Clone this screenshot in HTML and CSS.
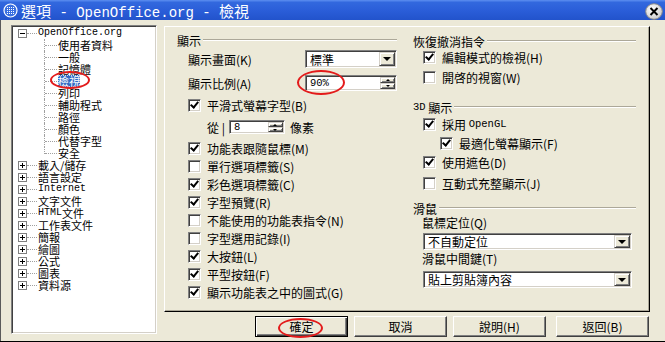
FILE: index.html
```html
<!DOCTYPE html>
<html lang="zh-Hant">
<head>
    <meta charset="UTF-8">
    <meta name="viewport" content="width=device-width, initial-scale=1.0">
    <title>選項 - OpenOffice.org - 檢視</title>
    <link rel="stylesheet" href="styles.css">
</head>
<body>
    <div class="window">
        <div class="title-bar">
            <svg class="app-icon" width="15" height="15" viewBox="0 0 15 15">
                <defs>
                    <pattern id="dots" width="2" height="2" patternUnits="userSpaceOnUse">
                        <rect width="1" height="1" fill="#fff"/>
                    </pattern>
                </defs>
                <circle cx="7.5" cy="7.5" r="6.5" fill="#3a6fe0" stroke="#fff" stroke-width="1.2"/>
                <rect x="4" y="4" width="7" height="7" fill="url(#dots)"/>
            </svg>
            <span class="title-text">選項<span class="t-lat"> - OpenOffice.org - </span>檢視</span>
            <svg class="close-btn" width="18" height="17" viewBox="0 0 18 17">
                <defs>
                    <radialGradient id="cg" cx="0.4" cy="0.35" r="0.7">
                        <stop offset="0" stop-color="#ffffff"/>
                        <stop offset="1" stop-color="#c9c9c9"/>
                    </radialGradient>
                </defs>
                <ellipse cx="9" cy="8.5" rx="8.3" ry="7.8" fill="url(#cg)" stroke="#8a8a8a"/>
                <path d="M5.5 5 L12.5 12 M12.5 5 L5.5 12" stroke="#000" stroke-width="2"/>
            </svg>
        </div>

        <div class="client">
            <div class="tree">
                <div class="node top"><span class="box"></span><span class="stub"></span><span class="mono">OpenOffice.org</span></div>
                <div class="node child"><span class="branch"></span>使用者資料</div>
                <div class="node child"><span class="branch"></span>一般</div>
                <div class="node child"><span class="branch"></span>記憶體</div>
                <div class="node child"><span class="branch"></span><span class="sel">檢視</span></div>
                <div class="node child"><span class="branch"></span>列印</div>
                <div class="node child"><span class="branch"></span>輔助程式</div>
                <div class="node child"><span class="branch"></span>路徑</div>
                <div class="node child"><span class="branch"></span>顏色</div>
                <div class="node child"><span class="branch"></span>代替字型</div>
                <div class="node child last"><span class="branch"></span>安全</div>
                <div class="node top"><span class="box plus"></span><span class="stub"></span>載入/儲存</div>
                <div class="node top"><span class="box plus"></span><span class="stub"></span>語言設定</div>
                <div class="node top"><span class="box plus"></span><span class="stub"></span><span class="mono">Internet</span></div>
                <div class="node top"><span class="box plus"></span><span class="stub"></span>文字文件</div>
                <div class="node top"><span class="box plus"></span><span class="stub"></span><span class="mono">HTML</span>文件</div>
                <div class="node top"><span class="box plus"></span><span class="stub"></span>工作表文件</div>
                <div class="node top"><span class="box plus"></span><span class="stub"></span>簡報</div>
                <div class="node top"><span class="box plus"></span><span class="stub"></span>繪圖</div>
                <div class="node top"><span class="box plus"></span><span class="stub"></span>公式</div>
                <div class="node top"><span class="box plus"></span><span class="stub"></span>圖表</div>
                <div class="node top"><span class="box plus"></span><span class="stub"></span>資料源</div>
            </div>

            <div class="side">
                <div class="page">
                    <div class="col col-left">
                        <div class="group-head">顯示</div>
                        <div class="field">
                            <span>顯示畫面(K)</span>
                            <span class="combo combo-small"><span class="combo-val">標準</span><span class="drop"></span></span>
                        </div>
                        <div class="field field-spin">
                            <span>顯示比例(A)</span>
                            <span class="spin spin-zoom"><span class="spin-val mono">90%</span><span class="spin-btns"><span class="sb up"></span><span class="sb down"></span></span></span>
                        </div>
                        <div class="check first"><span class="cb on"></span>平滑式螢幕字型(B)</div>
                        <div class="pixel-row">
                            <span>從 |</span>
                            <span class="spin spin-px"><span class="spin-val mono">8</span><span class="spin-btns"><span class="sb up"></span><span class="sb down"></span></span></span>
                            <span class="unit">像素</span>
                        </div>
                        <div class="check after-px"><span class="cb on"></span>功能表跟隨鼠標(M)</div>
                        <div class="check"><span class="cb"></span>單行選項標籤(S)</div>
                        <div class="check"><span class="cb on"></span>彩色選項標籤(C)</div>
                        <div class="check"><span class="cb on"></span>字型預覽(R)</div>
                        <div class="check"><span class="cb"></span>不能使用的功能表指令(N)</div>
                        <div class="check"><span class="cb"></span>字型選用記錄(I)</div>
                        <div class="check"><span class="cb on"></span>大按鈕(L)</div>
                        <div class="check"><span class="cb on"></span>平型按鈕(F)</div>
                        <div class="check"><span class="cb on"></span>顯示功能表之中的圖式(G)</div>
                    </div>

                    <div class="col col-right">
                        <div class="group-head">恢復撤消指令</div>
                        <div class="check"><span class="cb on"></span>編輯模式的檢視(H)</div>
                        <div class="check gap2"><span class="cb"></span>開啓的視窗(W)</div>

                        <div class="group-head head-3d"><span class="mono">3D</span>&nbsp;顯示</div>
                        <div class="check gap1"><span class="cb on"></span>採用&nbsp;<span class="mono">OpenGL</span></div>
                        <div class="check gap1 sub"><span class="cb on"></span>最適化螢幕顯示(F)</div>
                        <div class="check gap1"><span class="cb on"></span>使用遮色(D)</div>
                        <div class="check gap3"><span class="cb"></span>互動式充整顯示(J)</div>

                        <div class="group-head head-mouse">滑鼠</div>
                        <div class="label-row">鼠標定位(Q)</div>
                        <span class="combo combo-wide first-combo"><span class="combo-val">不自動定位</span><span class="drop"></span></span>
                        <div class="label-row second-label">滑鼠中間鍵(T)</div>
                        <span class="combo combo-wide second-combo"><span class="combo-val">貼上剪貼簿內容</span><span class="drop"></span></span>
                    </div>
                </div>

                <div class="buttons">
                    <button class="btn default" type="button">確定</button>
                    <button class="btn" type="button">取消</button>
                    <button class="btn" type="button">說明(H)</button>
                    <button class="btn last" type="button">返回(B)</button>
                </div>
            </div>
        </div>

        <!-- red annotation circles drawn over the screenshot -->
        <span class="mark mark-tree"></span>
        <span class="mark mark-zoom"></span>
        <span class="mark mark-ok"></span>
    </div>
</body>
</html>
```

FILE: styles.css
```css
* {
    box-sizing: border-box;
}

body {
    margin: 0;
    background: #ECE9D8;
    font-family: "Noto Sans CJK TC", sans-serif;
    font-size: 12px;
    color: #000000;
}

.mono {
    font-family: "Liberation Mono", "Noto Sans CJK TC", monospace;
    font-size: 10.5px;
}

.window {
    position: relative;
    width: 665px;
    height: 342px;
    background: #ECE9D8;
    border-bottom: 1px solid #000000;
}

/* title bar */
.title-bar {
    height: 20px;
    display: flex;
    align-items: center;
    padding: 0 2px 0 3px;
    background: linear-gradient(to bottom, #5d8ff0 0%, #3268de 12%, #2a5dd8 55%, #2253cb 100%);
    color: #FFFFFF;
}

.app-icon {
    flex: none;
}

.title-text {
    align-self: flex-start;
    margin-left: 3px;
    font-size: 15px;
    line-height: normal;
    white-space: pre;
}

.t-lat {
    font-family: "Liberation Mono", monospace;
    font-size: 14px;
}

.close-btn {
    margin-left: auto;
    margin-top: 3px;
    flex: none;
}

/* body of the dialog */
.client {
    display: flex;
    gap: 7px;
    height: 321px;
    padding: 5px 15px 0 10px;
    border-left: 1px solid #5a5a5a;
}

.tree {
    width: 146px;
    height: 309px;
    flex: none;
    background: #FFFFFF;
    border: 1px solid;
    border-color: #808080 #FFFFFF #FFFFFF #808080;
    box-shadow: inset 1px 1px 0 #404040, inset -1px -1px 0 #D4D0C8;
    padding-top: 1px;
    font-size: 11px;
}

.tree .mono {
    font-size: 10px;
}

.node {
    height: 12px;
    line-height: 12px;
    display: flex;
    align-items: center;
    white-space: nowrap;
}

.node.top {
    padding-left: 6px;
}

.node.child {
    padding-left: 32px;
}

.box {
    position: relative;
    width: 9px;
    height: 9px;
    flex: none;
    border: 1px solid #808080;
    background: #FFFFFF;
}

.box::before {
    content: "";
    position: absolute;
    left: 1px;
    top: 3px;
    width: 5px;
    height: 1px;
    background: #000000;
}

.box.plus::after {
    content: "";
    position: absolute;
    left: 3px;
    top: 1px;
    width: 1px;
    height: 5px;
    background: #000000;
}

.stub {
    width: 10px;
    flex: none;
    margin-right: 1px;
    border-top: 1px dotted #A0A0A0;
}

.branch {
    position: relative;
    align-self: stretch;
    width: 13px;
    flex: none;
    margin-right: 1px;
    border-left: 1px dotted #A0A0A0;
}

.branch::after {
    content: "";
    position: absolute;
    left: 0;
    top: 6px;
    width: 12px;
    border-top: 1px dotted #A0A0A0;
}

.child.last .branch {
    align-self: flex-start;
    height: 7px;
}

.sel {
    background: #316AC5;
    color: #FFFFFF;
    outline: 1px dotted #c9d8f2;
    outline-offset: -1px;
}

/* right side */
.side {
    width: 486px;
    flex: none;
    display: flex;
    flex-direction: column;
}

.page {
    margin-top: 1px;
    height: 286px;
    display: flex;
    border: 1px solid;
    border-color: #FFFFFF #000000 #000000 #FFFFFF;
    box-shadow: inset -1px -1px 0 #ACA899;
}

.col-left {
    width: 236px;
    flex: none;
    padding: 6px 4px 0 12px;
}

.col-right {
    flex: 1;
    padding: 7px 13px 0 12px;
}

.group-head {
    height: 14px;
    display: flex;
    align-items: center;
    white-space: nowrap;
}

.group-head::after {
    content: "";
    flex: 1;
    margin-left: 2px;
    border-top: 1px solid #ACA899;
    border-bottom: 1px solid #FFFFFF;
}

.head-3d {
    margin-top: 14px;
}

.head-mouse {
    margin-top: 9px;
}

.field {
    display: flex;
    align-items: center;
    height: 18px;
    margin-top: 3px;
    padding-left: 11px;
}

.field-spin {
    height: 16px;
    margin-top: 7px;
}

.check {
    display: flex;
    align-items: center;
    height: 18px;
    padding-left: 11px;
    white-space: nowrap;
}

.col-right .check {
    padding-left: 10px;
}

.col-right .check.sub {
    padding-left: 27px;
}

.check.first {
    margin-top: 5px;
}

.check.after-px {
    margin-top: 5px;
}

.check.gap1 {
    margin-top: 1px;
}

.check.gap2 {
    margin-top: 2px;
}

.check.gap3 {
    margin-top: 3px;
}

.cb {
    position: relative;
    width: 13px;
    height: 13px;
    flex: none;
    margin-right: 6px;
    background: #FFFFFF;
    border: 1px solid;
    border-color: #808080 #FFFFFF #FFFFFF #808080;
    box-shadow: inset 1px 1px 0 #404040, inset -1px -1px 0 #D4D0C8;
}

.cb.on::after {
    content: "";
    position: absolute;
    left: 3px;
    top: 0px;
    width: 3px;
    height: 6px;
    border: solid #000000;
    border-width: 0 2px 2px 0;
    transform: rotate(40deg);
}

/* sunken fields */
.combo,
.spin {
    display: flex;
    background: #FFFFFF;
    border: 1px solid;
    border-color: #808080 #FFFFFF #FFFFFF #808080;
    box-shadow: inset 1px 1px 0 #404040, inset -1px -1px 0 #D4D0C8;
    padding: 1px;
}

.combo-val,
.spin-val {
    flex: 1;
    display: flex;
    align-items: center;
    padding-left: 3px;
    white-space: nowrap;
}

.combo-small {
    margin-left: auto;
    width: 92px;
    height: 18px;
}

.combo-wide {
    height: 17px;
    margin: 4px 4px 0 10px;
}

.combo-wide.second-combo {
    margin-top: 6px;
}

.drop,
.sb {
    position: relative;
    background: #ECE9D8;
    border: 1px solid;
    border-color: #D4D0C8 #404040 #404040 #D4D0C8;
    box-shadow: inset 1px 1px 0 #FFFFFF, inset -1px -1px 0 #808080;
}

.drop {
    width: 16px;
    flex: none;
}

.drop::after {
    content: "";
    position: absolute;
    left: 50%;
    top: 50%;
    margin: -2px 0 0 -4px;
    border-left: 4px solid transparent;
    border-right: 4px solid transparent;
    border-top: 4px solid #000000;
}

.spin-zoom {
    margin-left: auto;
    width: 92px;
    height: 16px;
}

.spin-btns {
    width: 15px;
    flex: none;
    display: flex;
    flex-direction: column;
}

.sb {
    flex: 1;
}

.sb::after {
    content: "";
    position: absolute;
    left: 50%;
    top: 50%;
    margin: -1px 0 0 -2px;
    border-left: 2px solid transparent;
    border-right: 2px solid transparent;
}

.sb.up::after {
    border-bottom: 2px solid #000000;
}

.sb.down::after {
    border-top: 2px solid #000000;
}

.pixel-row {
    display: flex;
    align-items: center;
    height: 14px;
    margin-top: 6px;
    padding-left: 30px;
    white-space: pre;
}

.spin-px {
    width: 56px;
    height: 14px;
    margin-left: 4px;
}

.unit {
    margin-left: 5px;
}

.label-row {
    height: 14px;
    display: flex;
    align-items: center;
    padding-left: 9px;
}

.label-row.second-label {
    margin-top: 1px;
}

/* bottom buttons */
.buttons {
    display: flex;
    justify-content: flex-end;
    gap: 6px;
    margin-top: 4px;
    padding-right: 1px;
}

.btn {
    width: 93px;
    height: 21px;
    padding: 0;
    display: flex;
    align-items: center;
    justify-content: center;
    font-family: "Noto Sans CJK TC", sans-serif;
    font-size: 12px;
    color: #000000;
    background: #ECE9D8;
    border: 1px solid;
    border-color: #FFFFFF #404040 #404040 #FFFFFF;
    box-shadow: inset -1px -1px 0 #808080;
}

.btn.default {
    border-color: #000000;
    box-shadow: inset 1px 1px 0 #FFFFFF, inset -1px -1px 0 #404040, inset -2px -2px 0 #808080;
}

.btn.last {
    margin-left: 4px;
}

/* red hand-drawn ellipses */
.mark {
    position: absolute;
    border: 2px solid #E31B1B;
    border-radius: 50%;
    pointer-events: none;
}

.mark-tree {
    left: 50px;
    top: 71px;
    width: 40px;
    height: 18px;
}

.mark-zoom {
    left: 297px;
    top: 70px;
    width: 48px;
    height: 25px;
}

.mark-ok {
    left: 278px;
    top: 318px;
    width: 45px;
    height: 20px;
}
```
